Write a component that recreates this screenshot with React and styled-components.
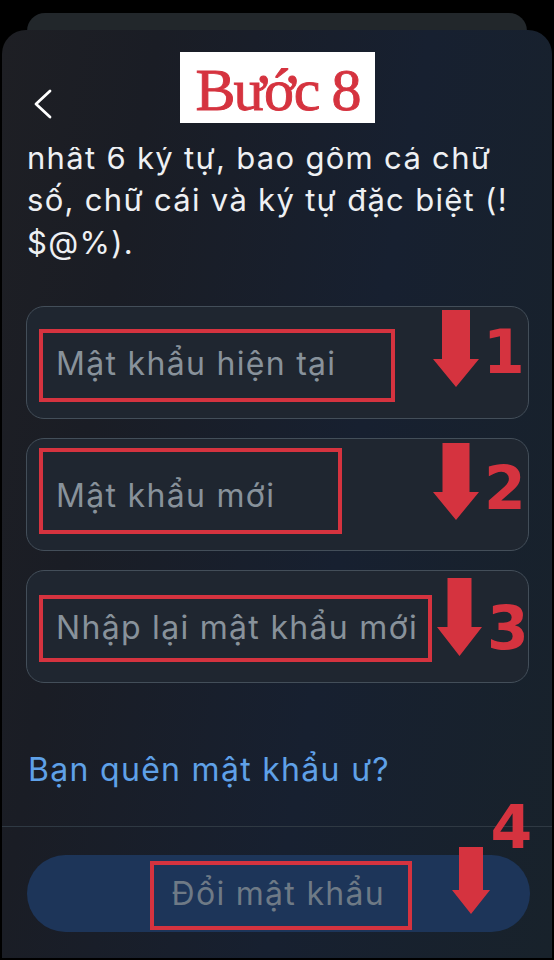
import React from "react";
import styled, { createGlobalStyle } from "styled-components";

const GlobalStyle = createGlobalStyle`
  html, body { margin: 0; padding: 0; background: #000; }
  body { font-family: Inter, "Noto Sans", "Liberation Sans", sans-serif; }
  * { box-sizing: border-box; }
`;

const RED = "#d5333f";

const Page = styled.div`
  width: 554px;
  height: 960px;
  padding: 13px 2px 2px;
  background: #000;
  overflow: hidden;
  display: flex;
  flex-direction: column;
`;

const BackTab = styled.div`
  height: 40px;
  margin: 0 25px -23px;
  border-radius: 18px 18px 0 0;
  background: #22272b;
`;

const Sheet = styled.main`
  position: relative;
  flex: 1;
  border-radius: 24px 24px 0 0;
  background: linear-gradient(100deg, #1e1f24 0%, #1a1d25 22%, #172030 60%, #18222b 100%);
  display: flex;
  flex-direction: column;
  overflow: hidden;
`;

const Header = styled.header`
  position: relative;
  height: 117px;
  flex: none;
  display: flex;
  align-items: flex-start;
  padding: 59px 0 0 31px;
`;

const BackButton = styled.button`
  width: 20px;
  height: 30px;
  padding: 0;
  border: 0;
  background: none;
  color: #fff;
  display: flex;
`;

const TitleTag = styled.div`
  position: absolute;
  left: 178px;
  top: 22px;
  width: 195px;
  height: 71px;
  background: #fff;
  display: flex;
  align-items: center;
  justify-content: center;
  font-family: "Liberation Serif", "DejaVu Serif", serif;
  font-size: 60px;
  letter-spacing: -2px;
  color: ${RED};
  -webkit-text-stroke: 0.9px ${RED};
  padding-top: 6px;
`;

const TextClip = styled.div`
  height: 118px;
  flex: none;
  overflow: hidden;
  padding: 0 10px 0 25px;
`;

const Body = styled.p`
  margin: -10.5px 0 0;
  font-size: 31px;
  letter-spacing: 1.3px;
  line-height: 42.5px;
  color: #eef0f3;
  white-space: nowrap;
`;

const FieldList = styled.div`
  margin-top: 41px;
  padding: 0 23px 0 24px;
  display: flex;
  flex-direction: column;
  gap: 19px;
`;

const Field = styled.div`
  position: relative;
  height: 113px;
  border: 1.5px solid #434e59;
  border-radius: 18px;
  background: #1f2630;
  display: flex;
  align-items: center;
  padding: 1px 0 0 29px;
`;

const Placeholder = styled.span`
  font-size: 32px;
  letter-spacing: 1.3px;
  color: #88929b;
  white-space: nowrap;
`;

const Highlight = styled.div`
  position: absolute;
  left: ${(p) => p.$left}px;
  top: ${(p) => p.$top}px;
  width: ${(p) => p.$w}px;
  height: ${(p) => p.$h}px;
  border: 4px solid ${RED};
  pointer-events: none;
`;

const ArrowMark = styled.svg`
  position: absolute;
  left: ${(p) => p.$left}px;
  top: ${(p) => p.$top}px;
`;

const StepNum = styled.span`
  position: absolute;
  left: ${(p) => p.$left}px;
  top: ${(p) => p.$top}px;
  font-family: "DejaVu Sans", sans-serif;
  font-weight: 700;
  font-size: 60px;
  line-height: 60px;
  color: ${RED};
`;

const ForgotLink = styled.a`
  margin-top: 66px;
  padding-left: 26px;
  font-size: 32px;
  letter-spacing: 1.3px;
  line-height: 42.5px;
  color: #5fa1e8;
  text-decoration: none;
  white-space: nowrap;
`;

const Divider = styled.hr`
  margin: 34px 0 0;
  border: 0;
  height: 1px;
  background: #2f3943;
`;

const SubmitRow = styled.div`
  margin: 28px 22px 0 24.5px;
`;

const SubmitButton = styled.div`
  position: relative;
  height: 77px;
  border-radius: 39px;
  background: #1d3559;
  display: flex;
  align-items: center;
  justify-content: center;
  font-size: 32px;
  letter-spacing: 1.3px;
  color: #6e7a86;
`;

function Arrow({ left, top, w, h, shaft, headTop }) {
  const s0 = (w - shaft) / 2;
  const s1 = s0 + shaft;
  return (
    <ArrowMark $left={left} $top={top} width={w} height={h} viewBox={`0 0 ${w} ${h}`}>
      <polygon
        fill={RED}
        points={`${s0},0 ${s1},0 ${s1},${headTop} ${w},${headTop} ${w / 2},${h} 0,${headTop} ${s0},${headTop}`}
      />
    </ArrowMark>
  );
}

export default function App() {
  return (
    <>
      <GlobalStyle />
      <Page>
        <BackTab />
        <Sheet>
          <Header>
            <BackButton aria-label="Quay lại">
              <svg width="20" height="30" viewBox="0 0 20 30">
                <polyline
                  points="17,2 3,15 17,28"
                  fill="none"
                  stroke="#fff"
                  strokeWidth="2.8"
                  strokeLinecap="round"
                  strokeLinejoin="round"
                />
              </svg>
            </BackButton>
            <TitleTag>Bước 8</TitleTag>
          </Header>

          <TextClip>
            <Body>
              nhất 6 ký tự, bao gồm cả chữ
              <br />
              số, chữ cái và ký tự đặc biệt (!
              <br />
              $@%).
            </Body>
          </TextClip>

          <FieldList>
            <Field>
              <Placeholder>Mật khẩu hiện tại</Placeholder>
              <Highlight $left={12} $top={22} $w={356} $h={73} />
              <Arrow left={406} top={3} w={46} h={77} shaft={28} headTop={49} />
              <StepNum $left={456} $top={15}>1</StepNum>
            </Field>
            <Field>
              <Placeholder>Mật khẩu mới</Placeholder>
              <Highlight $left={12} $top={9} $w={303} $h={86} />
              <Arrow left={406} top={4} w={46} h={77} shaft={27} headTop={49} />
              <StepNum $left={457} $top={19}>2</StepNum>
            </Field>
            <Field>
              <Placeholder>Nhập lại mật khẩu mới</Placeholder>
              <Highlight $left={12} $top={24} $w={393} $h={67} />
              <Arrow left={410} top={7} w={45} h={78} shaft={24} headTop={49} />
              <StepNum $left={460} $top={27}>3</StepNum>
            </Field>
          </FieldList>

          <ForgotLink href="#">Bạn quên mật khẩu ư?</ForgotLink>
          <Divider />
          <SubmitRow>
            <SubmitButton>
              Đổi mật khẩu
              <Highlight $left={123} $top={6} $w={262} $h={69} />
              <Arrow left={425} top={-8} w={38} h={67} shaft={24} headTop={43} />
              <StepNum $left={464} $top={-58}>4</StepNum>
            </SubmitButton>
          </SubmitRow>
        </Sheet>
      </Page>
    </>
  );
}
